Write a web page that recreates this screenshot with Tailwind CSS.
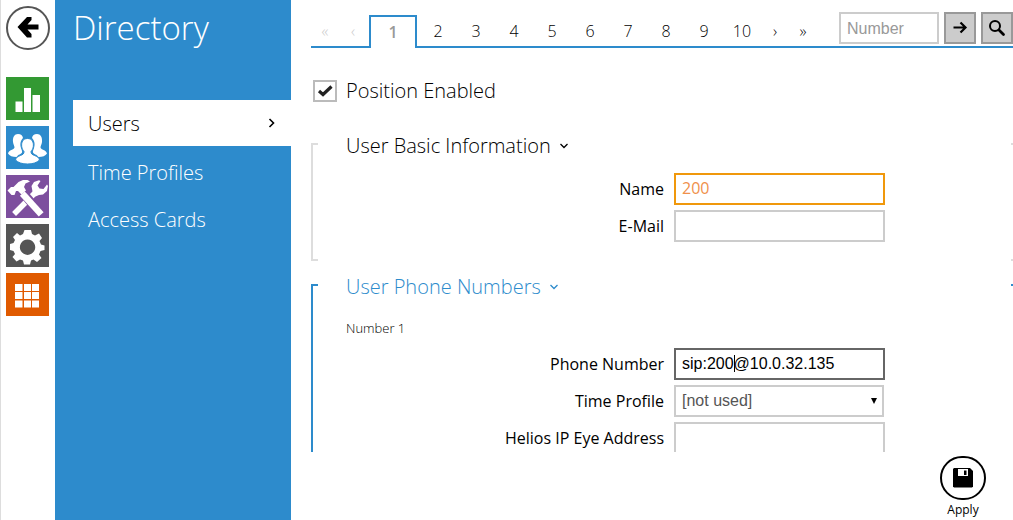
<!DOCTYPE html>
<html lang="en">
<head>
    <meta charset="UTF-8">
    <meta name="viewport" content="width=device-width, initial-scale=1.0">
    <title>Directory - Users</title>
    <script src="https://cdn.jsdelivr.net/npm/@tailwindcss/browser@4"></script>
</head>
<body class="bg-white text-black font-['Open_Sans','Noto_Sans',sans-serif]">
    <div class="flex h-screen overflow-hidden">
        <!-- Icon rail -->
        <nav class="flex flex-col shrink-0 w-[55px] border-l border-[#ddd] pl-[5px] pt-1.5 gap-1.5" aria-label="Sections">
            <button class="w-11 h-11 mb-[21px] rounded-full border-2 border-[#555] flex items-center justify-center" aria-label="Back">
                <svg class="w-6 h-6" viewBox="0 0 24 24" fill="#000"><path d="M1.500 11 11 1H15.500V4L11.500 8.500H22.500V13.500H11.500L15.500 18V21.500H11Z"/></svg>
            </button>
            <a href="#" class="block w-[43px] h-[43px] bg-[#339933]" aria-label="Status">
                <svg viewBox="0 0 43 43" fill="#fff"><path d="M9.500 24.500h7V35h-7zM18 11h7v24h-7zM26.500 18H34v17h-7.500z"/></svg>
            </a>
            <a href="#" class="block w-[43px] h-[43px] bg-[#2d8bcc]" aria-label="Directory">
                <svg viewBox="0 0 43 43" fill="#fff">
                    <path d="M7 16c-.5-5 1.500-8 5-8 3 0 4.500 1.500 5 4-3 3-3 7-2 10 .5 2 1.500 3 1 4.500-.5 1.500-4 2-5.500 4.500-4 0-7-1-8.500-3.500 1-4 6-3.500 6.500-6C8.500 20 7.500 19 7 16z"/>
                    <path d="M36 16c.5-5-1.500-8-5-8-3 0-4.500 1.500-5 4 3 3 3 7 2 10-.5 2-1.500 3-1 4.500.5 1.500 4 2 5.500 4.500 4 0 7-1 8.500-3.500-1-4-6-3.500-6.500-6C34.500 20 35.500 19 36 16z"/>
                    <path d="M21.500 12.500c4.500 0 6.300 3.500 5.800 8-.3 2.500-1.300 3.500-2.300 5-.5 5 7.500 3 8.500 8.500-2.500 2.800-7 4-12 4s-9.500-1.200-12-4c1-5.500 9-3.500 8.500-8.500-1-1.500-2-2.500-2.300-5-.5-4.500 1.300-8 5.800-8z" stroke="#2d8bcc" stroke-width="1"/>
                </svg>
            </a>
            <a href="#" class="block w-[43px] h-[43px] bg-[#7d4f9e]" aria-label="Hardware">
                <svg viewBox="0 0 43 43">
                    <path d="M10 37 29 18" stroke="#fff" stroke-width="5.500" stroke-linecap="square"/>
                    <path d="M29.500 21.500 26.500 16.500 25.500 11 28 7 33 5.200 34.500 6 31.500 10.500 33.500 13.500 37.500 14 41 9.500 42 11 41 16 37 19.500 33 20Z" fill="#fff"/>
                    <path d="M17 18 35 39" stroke="#7d4f9e" stroke-width="9"/>
                    <path d="M18.500 21 33 37" stroke="#fff" stroke-width="6.500" stroke-linecap="square"/>
                    <path d="M1.500 15.500 5 12 7.500 12 12.500 7 17 5H21.500L24 6.500 19.500 8.500 18 12 20 15.500 15.500 19.500 12 16 10 16 8.500 20 5.500 20Z" fill="#fff"/>
                </svg>
            </a>
            <a href="#" class="block w-[43px] h-[43px] bg-[#555]" aria-label="Services">
                <svg viewBox="0 0 43 43"><path fill="#fff" fill-rule="evenodd" d="M17 10 18.500 6 25 6 26 10 29 11.500 33 9.500 36 14 33.500 17 35 20.500 38.500 21.500V26L34.500 27 33 30.500 35.500 34 31 38 27.500 35.500 25 36.500 24 40.500H18L17 36.500 14 35.500 10.500 37.500 6.500 33 9 30 7.500 27 4 26V20L7.500 19 9 16 7 13 11 9 14 11.500ZM21.500 15.500a7.700 7.700 0 1 0 .1 0z"/></svg>
            </a>
            <a href="#" class="block w-[43px] h-[43px] bg-[#e05a00]" aria-label="System">
                <svg viewBox="0 0 43 43" fill="#fff"><path d="M9 11h7.500v7H9zM18 11h7v7h-7zM26 11h7v7h-7zM9 19h7.500v7H9zM18 19h7v7h-7zM26 19h7v7h-7zM9 27.500h7.500v7H9zM18 27.500h7v7h-7zM26 27.500h7v7h-7z"/></svg>
            </a>
        </nav>

        <!-- Sidebar menu -->
        <aside class="shrink-0 w-[236px] bg-[#2d8bcc] text-white font-light pl-[18px]">
            <h1 class="text-[33px] leading-[56px] font-light mb-11">Directory</h1>
            <nav class="flex flex-col text-xl" aria-label="Directory">
                <a href="#" class="flex items-center justify-between h-[46px] mb-0.5 pl-[15px] pr-[15px] bg-white text-black pt-0.5">
                    Users
                    <svg class="w-2 h-3" viewBox="0 0 8 12" fill="none" stroke="#000" stroke-width="1.600"><path d="M1.500 1 5.500 5 1.500 9"/></svg>
                </a>
                <a href="#" class="flex items-center h-[47px] pl-[15px] pt-0.5">Time Profiles</a>
                <a href="#" class="flex items-center h-[47px] pl-[15px] pt-0.5">Access Cards</a>
            </nav>
        </aside>

        <main class="flex flex-col flex-1 min-w-0 pl-5">
            <!-- Paging and search -->
            <div class="flex items-end justify-between shrink-0 h-12 border-b-2 border-[#2d8bcc]">
                <nav class="flex items-end -mb-0.5 text-base font-light text-center leading-[33px]" aria-label="Pages">
                    <a href="#" class="w-7 text-[#ccc]">«</a>
                    <a href="#" class="w-7 text-[#ccc]">‹</a>
                    <a href="#" class="w-12 h-[33px] mx-0.5 border-2 border-b-0 border-[#2d8bcc] bg-white text-[#999] font-semibold leading-[31px]" aria-current="page">1</a>
                    <a href="#" class="w-[38px]">2</a>
                    <a href="#" class="w-[38px]">3</a>
                    <a href="#" class="w-[38px]">4</a>
                    <a href="#" class="w-[38px]">5</a>
                    <a href="#" class="w-[38px]">6</a>
                    <a href="#" class="w-[38px]">7</a>
                    <a href="#" class="w-[38px]">8</a>
                    <a href="#" class="w-[38px]">9</a>
                    <a href="#" class="w-[38px]">10</a>
                    <a href="#" class="w-7">›</a>
                    <a href="#" class="w-7">»</a>
                </nav>
                <form class="flex gap-[5px] mb-0.5">
                    <input type="text" placeholder="Number" aria-label="Number" class="w-[100px] h-8 pt-0.5 px-1.5 border-2 border-[#ccc] text-base font-['Liberation_Sans',sans-serif] placeholder:text-[#999] outline-none">
                    <button type="button" class="w-8 h-8 flex items-center justify-center bg-[#ccc] border-2 border-[#999]" aria-label="Go">
                        <svg class="w-4 h-4" viewBox="0 0 16 16" fill="none" stroke="#000" stroke-width="2.200"><path d="M1.500 7.500H13M8.500 2.500 13.500 7.500 8.500 12.500"/></svg>
                    </button>
                    <button type="button" class="w-8 h-8 flex items-center justify-center bg-[#ccc] border-2 border-[#999]" aria-label="Search">
                        <svg class="w-[18px] h-[18px]" viewBox="0 0 18 18" fill="none" stroke="#000"><circle cx="7" cy="7" r="5" stroke-width="2"/><path d="M11 11 15.500 15.500" stroke-width="2.800" stroke-linecap="round"/></svg>
                    </button>
                </form>
            </div>

            <!-- Form -->
            <form class="flex-1 min-h-0 overflow-hidden pt-8">
                <div class="flex items-center h-[22px] pl-0.5 mb-[41px]">
                    <span class="grid w-6 h-[22px]">
                        <input id="enabled" type="checkbox" checked class="appearance-none col-start-1 row-start-1 w-6 h-[22px] border-2 border-[#bbb] bg-white">
                        <svg class="col-start-1 row-start-1 w-6 h-[22px] pointer-events-none" viewBox="0 0 24 22" fill="none" stroke="#222" stroke-width="3.200"><path d="M6 11 10 14.500 18.500 6.500"/></svg>
                    </span>
                    <label for="enabled" class="pl-[9px] text-xl font-light">Position Enabled</label>
                </div>

                <section class="flex mb-[23px]">
                    <div class="w-[7px] border-2 border-r-0 border-[#ddd]"></div>
                    <div class="flex-1 pl-7 pb-[19px]">
                        <h2 class="flex items-center gap-2 h-7 -mt-[11px] mb-[13px] text-xl font-light">
                            User Basic Information
                            <svg class="w-2.5 h-2" viewBox="0 0 10 8" fill="none" stroke="#000" stroke-width="1.300"><path d="M1.500 2 5 5.500 8.500 2"/></svg>
                        </h2>
                        <div class="grid grid-cols-[318px_211px] items-center gap-x-2.5 gap-y-[5px] text-base leading-5">
                            <label for="name" class="text-right">Name</label>
                            <input id="name" type="text" value="200" class="h-8 px-1.5 pb-0.5 border-2 border-[#f0980c] text-[#f0904a] text-base outline-none">
                            <label for="email" class="text-right">E-Mail</label>
                            <input id="email" type="email" class="h-8 px-1.5 border-2 border-[#ccc] outline-none">
                        </div>
                    </div>
                    <div class="w-0.5 border-y-2 border-[#ddd]"></div>
                </section>

                <section class="flex">
                    <div class="w-[7px] border-2 border-r-0 border-[#2d8bcc]"></div>
                    <div class="flex-1 pl-7 pb-[19px]">
                        <h2 class="flex items-center gap-2 h-7 -mt-[11px] mb-[17px] text-xl font-light text-[#2d8bcc]">
                            User Phone Numbers
                            <svg class="w-2.5 h-2" viewBox="0 0 10 8" fill="none" stroke="#2d8bcc" stroke-width="1.300"><path d="M1.500 2 5 5.500 8.500 2"/></svg>
                        </h2>
                        <h3 class="text-[13px] leading-5 font-light mb-2.5">Number 1</h3>
                        <div class="grid grid-cols-[318px_211px] items-center gap-x-2.5 gap-y-[5px] text-base leading-5">
                            <label for="phone" class="text-right">Phone Number</label>
                            <div class="relative">
                                <input id="phone" type="text" value="sip:200@10.0.32.135" class="block w-full h-8 px-1.5 border-2 border-[#666] text-base font-['Liberation_Sans',sans-serif] outline-none">
                                <!-- text caret -->
                                <span class="absolute left-[60px] top-[7px] w-px h-[17px] bg-black"></span>
                            </div>
                            <label for="profile" class="text-right">Time Profile</label>
                            <div class="relative pr-px">
                                <select id="profile" class="appearance-none block w-full h-8 px-1.5 border-2 border-[#ccc] bg-white text-base text-[#555] font-['Liberation_Sans',sans-serif]">
                                    <option>[not used]</option>
                                </select>
                                <svg class="absolute right-2 top-[13px] w-1.5 h-1.5 pointer-events-none" viewBox="0 0 6 6"><path d="M0 0H6L3 6Z"/></svg>
                            </div>
                            <label for="helios" class="text-right">Helios IP Eye Address</label>
                            <input id="helios" type="text" class="h-8 px-1.5 border-2 border-[#ccc] outline-none">
                        </div>
                    </div>
                    <div class="w-0.5 border-y-2 border-[#2d8bcc]"></div>
                </section>
            </form>

            <!-- Footer -->
            <footer class="flex justify-end shrink-0 h-[68px] pt-1 pr-[27px]">
                <button class="flex flex-col items-center text-xs">
                    <span class="w-[46px] h-[46px] rounded-full border-2 border-black flex items-center justify-center">
                        <svg class="w-5 h-5" viewBox="0 0 20 20"><path d="M1 0H17L20 3V18.500L19 19.500H1L0 18.500V1Z"/><path fill="#fff" d="M5 1H15V8H5Z"/><path d="M11 2.500H13.500V7H11Z"/></svg>
                    </span>
                    <span class="leading-5">Apply</span>
                </button>
            </footer>
        </main>
    </div>
</body>
</html>
